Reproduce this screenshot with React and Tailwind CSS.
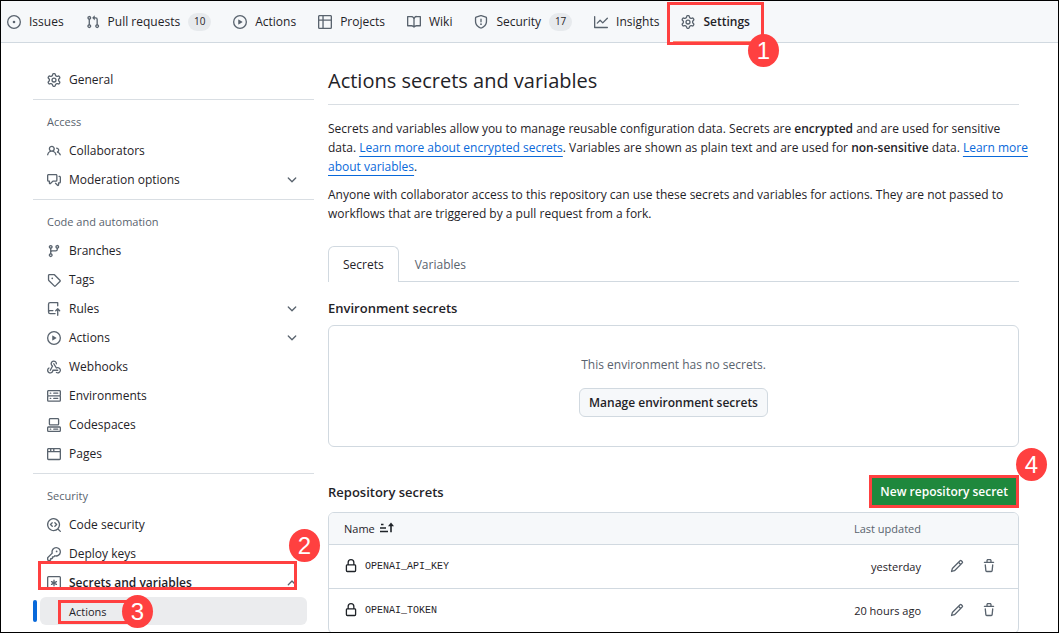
import React from "react";

const PATHS = {
  issue: "M8 9.5a1.5 1.5 0 1 0 0-3 1.5 1.5 0 0 0 0 3ZM8 0a8 8 0 1 1 0 16A8 8 0 0 1 8 0ZM1.5 8a6.5 6.5 0 1 0 13 0 6.5 6.5 0 0 0-13 0Z",
  pull: "M1.5 3.25a2.25 2.25 0 1 1 3 2.122v5.256a2.251 2.251 0 1 1-1.5 0V5.372A2.25 2.25 0 0 1 1.5 3.25Zm5.677-.177L9.573.677A.25.25 0 0 1 10 .854V2.5h1A2.5 2.5 0 0 1 13.5 5v5.628a2.251 2.251 0 1 1-1.5 0V5a1 1 0 0 0-1-1h-1v1.646a.25.25 0 0 1-.427.177L7.177 3.427a.25.25 0 0 1 0-.354ZM3.75 2.5a.75.75 0 1 0 0 1.5.75.75 0 0 0 0-1.5Zm0 9.5a.75.75 0 1 0 0 1.5.75.75 0 0 0 0-1.5Zm8.25.75a.75.75 0 1 0 1.5 0 .75.75 0 0 0-1.5 0Z",
  play: "M8 0a8 8 0 1 1 0 16A8 8 0 0 1 8 0ZM1.5 8a6.5 6.5 0 1 0 13 0 6.5 6.5 0 0 0-13 0Zm4.879-2.773 4.264 2.559a.25.25 0 0 1 0 .428l-4.264 2.559A.25.25 0 0 1 6 10.559V5.442a.25.25 0 0 1 .379-.215Z",
  table: "M0 1.75C0 .784.784 0 1.75 0h12.5C15.216 0 16 .784 16 1.75v12.5A1.75 1.75 0 0 1 14.25 16H1.75A1.75 1.75 0 0 1 0 14.25ZM6.5 6.5v8h7.75a.25.25 0 0 0 .25-.25V6.5Zm8-1.5V1.75a.25.25 0 0 0-.25-.25H6.5V5Zm-13 1.5v7.75c0 .138.112.25.25.25H5v-8ZM5 5V1.5H1.75a.25.25 0 0 0-.25.25V5Z",
  book: "M0 1.75A.75.75 0 0 1 .75 1h4.253c1.227 0 2.317.59 3 1.501A3.743 3.743 0 0 1 11.006 1h4.245a.75.75 0 0 1 .75.75v10.5a.75.75 0 0 1-.75.75h-4.507a2.25 2.25 0 0 0-1.591.659l-.622.621a.75.75 0 0 1-1.06 0l-.622-.621A2.25 2.25 0 0 0 5.258 13H.75a.75.75 0 0 1-.75-.75Zm7.251 10.324.004-5.073-.002-2.253A2.25 2.25 0 0 0 5.003 2.5H1.5v9h3.757a3.75 3.75 0 0 1 1.994.574ZM8.755 4.75l-.004 7.322a3.752 3.752 0 0 1 1.992-.572H14.5v-9h-3.495a2.25 2.25 0 0 0-2.25 2.25Z",
  shield: "M7.467.133a1.748 1.748 0 0 1 1.066 0l5.25 1.68A1.75 1.75 0 0 1 15 3.48V7c0 1.566-.32 3.182-1.303 4.682-.983 1.498-2.585 2.813-5.032 3.855a1.697 1.697 0 0 1-1.33 0c-2.447-1.042-4.049-2.357-5.032-3.855C1.32 10.182 1 8.566 1 7V3.48a1.75 1.75 0 0 1 1.217-1.667Zm.61 1.429a.25.25 0 0 0-.153 0l-5.25 1.68a.25.25 0 0 0-.174.238V7c0 1.358.275 2.666 1.057 3.86.784 1.194 2.121 2.34 4.366 3.297a.196.196 0 0 0 .154 0c2.245-.956 3.582-2.104 4.366-3.298C13.225 9.666 13.5 8.36 13.5 7V3.48a.251.251 0 0 0-.174-.237l-5.25-1.68ZM8.75 4.75v3a.75.75 0 0 1-1.5 0v-3a.75.75 0 0 1 1.5 0ZM9 10.5a1 1 0 1 1-2 0 1 1 0 0 1 2 0Z",
  graph: "M1.5 1.75V13.5h13.75a.75.75 0 0 1 0 1.5H.75a.75.75 0 0 1-.75-.75V1.75a.75.75 0 0 1 1.5 0Zm14.28 2.53-5.25 5.25a.75.75 0 0 1-1.06 0L7 7.06 4.28 9.78a.751.751 0 0 1-1.042-.018.751.751 0 0 1-.018-1.042l3.25-3.25a.75.75 0 0 1 1.06 0L10 7.94l4.72-4.72a.751.751 0 0 1 1.042.018.751.751 0 0 1 .018 1.042Z",
  gear: "M8 0a8.2 8.2 0 0 1 .701.031C9.444.095 9.99.645 10.16 1.29l.288 1.107c.018.066.079.158.212.224.231.114.454.243.668.386.123.082.233.09.299.071l1.103-.303c.644-.176 1.392.021 1.82.63.27.385.506.792.704 1.218.315.675.111 1.422-.364 1.891l-.814.806c-.049.048-.098.147-.088.294.016.257.016.515 0 .772-.01.147.038.246.088.294l.814.806c.475.469.679 1.216.364 1.891a7.977 7.977 0 0 1-.704 1.217c-.428.61-1.176.807-1.82.63l-1.102-.302c-.067-.019-.177-.011-.3.071a5.909 5.909 0 0 1-.668.386c-.133.066-.194.158-.211.224l-.29 1.106c-.168.646-.715 1.196-1.458 1.26a8.006 8.006 0 0 1-1.402 0c-.743-.064-1.289-.614-1.458-1.26l-.289-1.106c-.018-.066-.079-.158-.212-.224a5.738 5.738 0 0 1-.668-.386c-.123-.082-.233-.09-.299-.071l-1.103.303c-.644.176-1.392-.021-1.82-.63a8.12 8.12 0 0 1-.704-1.218c-.315-.675-.111-1.422.363-1.891l.815-.806c.05-.048.098-.147.088-.294a6.214 6.214 0 0 1 0-.772c.01-.147-.038-.246-.088-.294l-.815-.806C.635 6.045.431 5.298.746 4.623a7.92 7.92 0 0 1 .704-1.217c.428-.61 1.176-.807 1.82-.63l1.102.302c.067.019.177.011.3-.071.214-.143.437-.272.668-.386.133-.066.194-.158.211-.224l.29-1.106C6.009.645 6.556.095 7.299.03 7.53.01 7.764 0 8 0Zm-.571 1.525c-.036.003-.108.036-.137.146l-.289 1.105c-.147.561-.549.967-.998 1.189-.173.086-.34.183-.5.29-.417.278-.97.423-1.529.27l-1.103-.303c-.109-.03-.175.016-.195.045-.22.312-.412.644-.573.99-.014.031-.021.11.059.19l.815.806c.411.406.562.957.53 1.456a4.709 4.709 0 0 0 0 .582c.032.499-.119 1.05-.53 1.456l-.815.806c-.081.08-.073.159-.059.19.162.346.353.677.573.989.02.03.085.076.195.046l1.102-.303c.56-.153 1.113-.008 1.53.27.161.107.328.204.501.29.447.222.85.629.997 1.189l.289 1.105c.029.109.101.143.137.146a6.6 6.6 0 0 0 1.142 0c.036-.003.108-.036.137-.146l.289-1.105c.147-.561.549-.967.998-1.189.173-.086.34-.183.5-.29.417-.278.97-.423 1.529-.27l1.103.303c.109.029.175-.016.195-.045.22-.313.411-.644.573-.99.014-.031.021-.11-.059-.19l-.815-.806c-.411-.406-.562-.957-.53-1.456a4.709 4.709 0 0 0 0-.582c-.032-.499.119-1.05.53-1.456l.815-.806c.081-.08.073-.159.059-.19a6.464 6.464 0 0 0-.573-.989c-.02-.03-.085-.076-.195-.046l-1.102.303c-.56.153-1.113.008-1.53-.27a4.44 4.44 0 0 0-.501-.29c-.447-.222-.85-.629-.997-1.189l-.289-1.105c-.029-.11-.101-.143-.137-.146a6.6 6.6 0 0 0-1.142 0ZM11 8a3 3 0 1 1-6 0 3 3 0 0 1 6 0ZM9.5 8a1.5 1.5 0 1 0-3.001.001A1.5 1.5 0 0 0 9.5 8Z",
  people: "M2 5.5a3.5 3.5 0 1 1 5.898 2.549 5.508 5.508 0 0 1 3.034 4.084.75.75 0 1 1-1.482.235 4 4 0 0 0-7.9 0 .75.75 0 0 1-1.482-.236A5.507 5.507 0 0 1 3.102 8.05 3.493 3.493 0 0 1 2 5.5ZM11 4a3.001 3.001 0 0 1 2.22 5.018 5.01 5.01 0 0 1 2.56 3.012.749.749 0 0 1-.885.954.752.752 0 0 1-.549-.514 3.507 3.507 0 0 0-2.522-2.372.75.75 0 0 1-.574-.73v-.352a.75.75 0 0 1 .416-.672A1.5 1.5 0 0 0 11 5.5.75.75 0 0 1 11 4Zm-5.5-.5a2 2 0 1 0-.001 3.999A2 2 0 0 0 5.5 3.5Z",
  discussion: "M1.75 1h8.5c.966 0 1.75.784 1.75 1.75v5.5A1.75 1.75 0 0 1 10.25 10H7.061l-2.574 2.573A1.458 1.458 0 0 1 2 11.543V10h-.25A1.75 1.75 0 0 1 0 8.25v-5.5C0 1.784.784 1 1.75 1ZM1.5 2.75v5.5c0 .138.112.25.25.25h1a.75.75 0 0 1 .75.75v2.19l2.72-2.72a.749.749 0 0 1 .53-.22h3.5a.25.25 0 0 0 .25-.25v-5.5a.25.25 0 0 0-.25-.25h-8.5a.25.25 0 0 0-.25.25Zm13 2a.25.25 0 0 0-.25-.25h-.5a.75.75 0 0 1 0-1.5h.5c.966 0 1.75.784 1.75 1.75v5.5A1.75 1.75 0 0 1 14.25 12H14v1.543a1.458 1.458 0 0 1-2.487 1.03L9.22 12.28a.749.749 0 0 1 .326-1.275.749.749 0 0 1 .734.215l2.22 2.22v-2.19a.75.75 0 0 1 .75-.75h1a.25.25 0 0 0 .25-.25Z",
  chevronDown: "M12.78 5.22a.749.749 0 0 1 0 1.06l-4.25 4.25a.749.749 0 0 1-1.06 0L3.22 6.28a.749.749 0 1 1 1.06-1.06L8 8.939l3.72-3.719a.749.749 0 0 1 1.06 0Z",
  chevronUp: "M3.22 10.53a.749.749 0 0 1 0-1.06l4.25-4.25a.749.749 0 0 1 1.06 0l4.25 4.25a.749.749 0 1 1-1.06 1.06L8 6.811 4.28 10.53a.749.749 0 0 1-1.06 0Z",
  branch: "M9.5 3.25a2.25 2.25 0 1 1 3 2.122V6A2.5 2.5 0 0 1 10 8.5H6a1 1 0 0 0-1 1v1.128a2.251 2.251 0 1 1-1.5 0V5.372a2.25 2.25 0 1 1 1.5 0v1.836A2.493 2.493 0 0 1 6 7h4a1 1 0 0 0 1-1v-.628A2.25 2.25 0 0 1 9.5 3.25Zm-6 0a.75.75 0 1 0 1.5 0 .75.75 0 0 0-1.5 0Zm8.25-.75a.75.75 0 1 0 0 1.5.75.75 0 0 0 0-1.5ZM4.25 12a.75.75 0 1 0 0 1.5.75.75 0 0 0 0-1.5Z",
  tag: "M1 7.775V2.75C1 1.784 1.784 1 2.75 1h5.025c.464 0 .91.184 1.238.513l6.25 6.25a1.75 1.75 0 0 1 0 2.474l-5.026 5.026a1.75 1.75 0 0 1-2.474 0l-6.25-6.25A1.752 1.752 0 0 1 1 7.775Zm1.5 0c0 .066.026.13.073.177l6.25 6.25a.25.25 0 0 0 .354 0l5.025-5.025a.25.25 0 0 0 0-.354l-6.25-6.25a.25.25 0 0 0-.177-.073H2.75a.25.25 0 0 0-.25.25ZM6 5a1 1 0 1 1 0 2 1 1 0 0 1 0-2Z",
  repoPush: "M1 2.5A2.5 2.5 0 0 1 3.5 0h8.75a.75.75 0 0 1 .75.75v3.5a.75.75 0 0 1-1.5 0V1.5h-8a1 1 0 0 0-1 1v6.708A2.493 2.493 0 0 1 3.5 9h3.25a.75.75 0 0 1 0 1.5H3.5a1 1 0 0 0 0 2h5.75a.75.75 0 0 1 0 1.5H3.5A2.5 2.5 0 0 1 1 11.5ZM11.5 15.25V9.6l-.97.97a.75.75 0 0 1-1.06-1.06l2.25-2.25a.75.75 0 0 1 1.06 0l2.25 2.25a.75.75 0 0 1-1.06 1.06L13 9.6v5.65a.75.75 0 0 1-1.5 0Z",
  webhook: "M5.5 4.25a2.25 2.25 0 0 1 4.5 0 .75.75 0 0 0 1.5 0 3.75 3.75 0 1 0-6.14 2.889l-2.272 4.258a.75.75 0 0 0 1.324.706L7 7.25a.75.75 0 0 0-.309-1.015A2.25 2.25 0 0 1 5.5 4.25ZM7.364 3.607a.75.75 0 0 1 1.03.257l2.608 4.349a3.75 3.75 0 1 1-.628 6.785.75.75 0 0 1 .752-1.299 2.25 2.25 0 1 0-.033-3.88.75.75 0 0 1-1.03-.256L7.107 4.636a.75.75 0 0 1 .257-1.03ZM2.9 8.776A.75.75 0 0 1 2.625 9.8 2.25 2.25 0 1 0 6 11.75a.75.75 0 0 1 .75-.751h5.5a.75.75 0 0 1 0 1.5H7.425a3.751 3.751 0 1 1-5.55-3.998.75.75 0 0 1 1.024.274Z",
  server: "M1.75 1h12.5c.966 0 1.75.784 1.75 1.75v4c0 .372-.116.717-.314 1 .198.283.314.628.314 1v4a1.75 1.75 0 0 1-1.75 1.75H1.75A1.75 1.75 0 0 1 0 12.75v-4c0-.358.109-.707.314-1a1.739 1.739 0 0 1-.314-1v-4C0 1.784.784 1 1.75 1ZM1.5 2.75v4c0 .138.112.25.25.25h12.5a.25.25 0 0 0 .25-.25v-4a.25.25 0 0 0-.25-.25H1.75a.25.25 0 0 0-.25.25Zm.25 5.75a.25.25 0 0 0-.25.25v4c0 .138.112.25.25.25h12.5a.25.25 0 0 0 .25-.25v-4a.25.25 0 0 0-.25-.25ZM7 4.75A.75.75 0 0 1 7.75 4h4.5a.75.75 0 0 1 0 1.5h-4.5A.75.75 0 0 1 7 4.75ZM7.75 10h4.5a.75.75 0 0 1 0 1.5h-4.5a.75.75 0 0 1 0-1.5ZM3 4.75A.75.75 0 0 1 3.75 4h.5a.75.75 0 0 1 0 1.5h-.5A.75.75 0 0 1 3 4.75ZM3.75 10h.5a.75.75 0 0 1 0 1.5h-.5a.75.75 0 0 1 0-1.5Z",
  codespaces: "M0 11.25c0-.966.784-1.75 1.75-1.75h12.5c.966 0 1.75.784 1.75 1.75v3A1.75 1.75 0 0 1 14.25 16H1.75A1.75 1.75 0 0 1 0 14.25Zm2-9.5C2 .784 2.784 0 3.75 0h8.5C13.216 0 14 .784 14 1.75v5a1.75 1.75 0 0 1-1.75 1.75h-8.5A1.75 1.75 0 0 1 2 6.75Zm1.75-.25a.25.25 0 0 0-.25.25v5c0 .138.112.25.25.25h8.5a.25.25 0 0 0 .25-.25v-5a.25.25 0 0 0-.25-.25Zm-2 9.5a.25.25 0 0 0-.25.25v3c0 .138.112.25.25.25h12.5a.25.25 0 0 0 .25-.25v-3a.25.25 0 0 0-.25-.25ZM7 12.75a.75.75 0 0 1 .75-.75h4.5a.75.75 0 0 1 0 1.5h-4.5a.75.75 0 0 1-.75-.75Zm-4 0a.75.75 0 0 1 .75-.75h.5a.75.75 0 0 1 0 1.5h-.5a.75.75 0 0 1-.75-.75Z",
  browser: "M0 2.75C0 1.784.784 1 1.75 1h12.5c.966 0 1.75.784 1.75 1.75v10.5A1.75 1.75 0 0 1 14.25 15H1.75A1.75 1.75 0 0 1 0 13.25ZM14.5 6h-13v7.25c0 .138.112.25.25.25h12.5a.25.25 0 0 0 .25-.25Zm-6-3.5v2h6V2.75a.25.25 0 0 0-.25-.25ZM5 2.5v2h2v-2Zm-3.25 0a.25.25 0 0 0-.25.25V4.5h2v-2Z",
  codescan: "M8.47 4.97a.75.75 0 0 0 0 1.06L9.94 7.5 8.47 8.97a.75.75 0 1 0 1.06 1.06l2-2a.75.75 0 0 0 0-1.06l-2-2a.75.75 0 0 0-1.06 0ZM6.53 6.03a.75.75 0 0 0-1.06-1.06l-2 2a.75.75 0 0 0 0 1.06l2 2a.75.75 0 1 0 1.06-1.06L5.06 7.5l1.47-1.47ZM12.246 13.307a7.501 7.501 0 1 1 1.06-1.06l2.474 2.473a.749.749 0 0 1-.326 1.275.749.749 0 0 1-.734-.215ZM1.5 7.5a6.002 6.002 0 0 0 3.608 5.504 6.002 6.002 0 0 0 6.486-1.117.748.748 0 0 1 .292-.293A6 6 0 1 0 1.5 7.5Z",
  key: "M10.5 0a5.499 5.499 0 1 1-1.288 10.848l-.932.932a.749.749 0 0 1-.53.22H7v.75a.749.749 0 0 1-.22.53l-.5.5a.749.749 0 0 1-.53.22H5v.75a.749.749 0 0 1-.22.53l-.5.5a.749.749 0 0 1-.53.22h-2A1.75 1.75 0 0 1 0 14.25v-2c0-.199.079-.389.22-.53l4.932-4.932A5.5 5.5 0 0 1 10.5 0Zm-4 5.5c-.001.431.069.86.205 1.269a.75.75 0 0 1-.181.768L1.5 12.56v1.69c0 .138.112.25.25.25h1.69l.06-.06v-1.19a.75.75 0 0 1 .75-.75h1.19l.06-.06v-1.19a.75.75 0 0 1 .75-.75h1.19l1.023-1.025a.75.75 0 0 1 .768-.18A4 4 0 1 0 6.5 5.5ZM11 6a1 1 0 1 1 0-2 1 1 0 0 1 0 2Z",
  lock: "M4 4a4 4 0 0 1 8 0v2h.25c.966 0 1.75.784 1.75 1.75v5.5A1.75 1.75 0 0 1 12.25 15h-8.5A1.75 1.75 0 0 1 2 13.25v-5.5C2 6.784 2.784 6 3.75 6H4Zm8.25 3.5h-8.5a.25.25 0 0 0-.25.25v5.5c0 .138.112.25.25.25h8.5a.25.25 0 0 0 .25-.25v-5.5a.25.25 0 0 0-.25-.25ZM10.5 6V4a2.5 2.5 0 1 0-5 0v2Z",
  pencil: "M11.013 1.427a1.75 1.75 0 0 1 2.474 0l1.086 1.086a1.75 1.75 0 0 1 0 2.474l-8.61 8.61c-.21.21-.47.364-.756.445l-3.251.93a.75.75 0 0 1-.927-.928l.929-3.25c.081-.286.235-.547.445-.758l8.61-8.61Zm.176 4.823L9.75 4.81l-6.286 6.287a.253.253 0 0 0-.064.108l-.558 1.953 1.953-.558a.253.253 0 0 0 .108-.064Zm1.238-3.763a.25.25 0 0 0-.354 0L10.811 3.75l1.439 1.44 1.263-1.263a.25.25 0 0 0 0-.354Z",
  trash: "M11 1.75V3h2.25a.75.75 0 0 1 0 1.5H2.75a.75.75 0 0 1 0-1.5H5V1.75C5 .784 5.784 0 6.75 0h2.5C10.216 0 11 .784 11 1.75ZM4.496 6.675l.66 6.6a.25.25 0 0 0 .249.225h5.19a.25.25 0 0 0 .249-.225l.66-6.6a.75.75 0 0 1 1.492.149l-.66 6.6A1.748 1.748 0 0 1 10.595 15h-5.19a1.75 1.75 0 0 1-1.741-1.575l-.66-6.6a.75.75 0 1 1 1.492-.15ZM6.5 1.75V3h3V1.75a.25.25 0 0 0-.25-.25h-2.5a.25.25 0 0 0-.25.25Z",
};

function Icon({ name, className = "text-[#59636e]" }) {
  return (
    <svg viewBox="0 0 16 16" width="14" height="14" aria-hidden="true" className={`shrink-0 ${className}`}>
      {name === "asterisk" ? (
        <g fill="none" stroke="currentColor" strokeWidth="1.5" strokeLinecap="round">
          <rect x="0.75" y="0.75" width="14.5" height="14.5" rx="1" />
          <path d="M8 4.750v6.500M5.200 6.400l5.600 3.200M10.800 6.400 5.200 9.600" />
        </g>
      ) : (
        <path fill="currentColor" fillRule="evenodd" d={PATHS[name]} />
      )}
    </svg>
  );
}

function SortIcon() {
  return (
    <svg viewBox="0 0 16 16" width="16" height="16" aria-hidden="true" className="shrink-0">
      <g fill="none" stroke="currentColor" strokeWidth="1.4">
        <path d="M2 4.500h2.500M1 8h6M1 11.500h8" />
        <path d="M12 12.200V4" strokeWidth="1.600" />
      </g>
      <path d="M12 2.600 15 6.200H9Z" fill="currentColor" />
    </svg>
  );
}

function Frame({ className }) {
  return <span aria-hidden="true" className={`pointer-events-none absolute border-[3px] border-[#ff4040] ${className}`} />;
}

function Step({ n, className }) {
  return (
    <span className={`absolute z-10 flex h-[33px] w-[31px] items-center justify-center rounded-[50%] bg-[#ff4040] font-['Liberation_Sans',sans-serif] text-[24px] font-normal leading-none text-white ${className}`}>
      {n}
    </span>
  );
}

const NAV = [
  { icon: "issue", label: "Issues" },
  { icon: "pull", label: "Pull requests", count: 10 },
  { icon: "play", label: "Actions" },
  { icon: "table", label: "Projects" },
  { icon: "book", label: "Wiki" },
  { icon: "shield", label: "Security", count: 17 },
  { icon: "graph", label: "Insights" },
];

const GROUPS = [
  { items: [{ icon: "gear", label: "General" }] },
  {
    title: "Access",
    items: [
      { icon: "people", label: "Collaborators" },
      { icon: "discussion", label: "Moderation options", more: true },
    ],
  },
  {
    title: "Code and automation",
    items: [
      { icon: "branch", label: "Branches" },
      { icon: "tag", label: "Tags" },
      { icon: "repoPush", label: "Rules", more: true },
      { icon: "play", label: "Actions", more: true },
      { icon: "webhook", label: "Webhooks" },
      { icon: "server", label: "Environments" },
      { icon: "codespaces", label: "Codespaces" },
      { icon: "browser", label: "Pages" },
    ],
  },
  {
    title: "Security",
    items: [
      { icon: "codescan", label: "Code security" },
      { icon: "key", label: "Deploy keys" },
    ],
  },
];

const SECRETS = [
  { name: "OPENAI_API_KEY", updated: "yesterday" },
  { name: "OPENAI_TOKEN", updated: "20 hours ago" },
];

function TopNav() {
  return (
    <nav aria-label="Repository" className="flex h-[42px] shrink-0 gap-[10px] border-b border-[#d1d9e0] bg-[#f6f8fa]">
      {NAV.map((item) => (
        <a key={item.label} href="#" className="flex items-center gap-2 whitespace-nowrap px-1.5">
          <Icon name={item.icon} />
          {item.label}
          {item.count && (
            <span className="flex h-[18px] w-[23px] items-center justify-center rounded-full bg-[#e7eaed] text-[10px] font-medium">{item.count}</span>
          )}
        </a>
      ))}
      <a href="#" aria-current="page" className="relative flex items-center gap-2 whitespace-nowrap px-1.5 font-semibold">
        <Icon name="gear" />
        Settings
        <span aria-hidden="true" className="absolute -inset-x-0.5 -bottom-px h-0.5 bg-[#fd8c73]" />
        <Frame className="-inset-x-2 -bottom-[3px] top-px" />
        <Step n={1} className="-bottom-[25px] -right-[23px]" />
      </a>
    </nav>
  );
}

function SideRow({ icon, label, more }) {
  const cls = "flex h-[29px] w-full items-center gap-2 pl-[14px] pr-[15px] text-left";
  if (more) {
    return (
      <button type="button" aria-expanded="false" className={cls}>
        <Icon name={icon} />
        <span className="flex-1">{label}</span>
        <Icon name="chevronDown" />
      </button>
    );
  }
  return (
    <a href="#" className={cls}>
      <Icon name={icon} />
      {label}
    </a>
  );
}

function Sidebar() {
  return (
    <nav aria-label="Settings" className="w-[281px] shrink-0 pt-[22px]">
      {GROUPS.map((group, i) => (
        <section key={i} className={i < GROUPS.length - 1 ? "border-b border-[#d9dee3] pb-[5px]" : ""}>
          {group.title && (
            <h3 className="flex h-9 items-center pl-[14px] pt-1.5 text-[11px] font-medium text-[#59636e]">{group.title}</h3>
          )}
          <ul>
            {group.items.map((item) => (
              <li key={item.label}>
                <SideRow {...item} />
              </li>
            ))}
          </ul>
        </section>
      ))}
      <div className="relative">
        <button type="button" aria-expanded="true" className="flex h-[29px] w-full items-center gap-2 pl-[14px] pr-[15px] text-left font-semibold">
          <Icon name="asterisk" />
          <span className="flex-1">Secrets and variables</span>
          <Icon name="chevronUp" />
        </button>
        <Frame className="-top-[7px] left-[5px] right-[17px] h-[29px]" />
        <Step n={2} className="-right-[6px] -top-[39px]" />
      </div>
      <div className="relative flex items-center gap-[3px]">
        <span aria-hidden="true" className="h-[22px] w-1 rounded-full bg-[#0969da]" />
        <a href="#" aria-current="page" className="mr-[7px] flex h-[28px] flex-1 items-center rounded-md bg-[#ebecee] pl-[29px] text-[11px]">
          Actions
        </a>
        <Frame className="left-[25px] top-[3px] h-[24px] w-[72px]" />
        <Step n={3} className="-top-[2px] left-[89px]" />
      </div>
    </nav>
  );
}

function DocLink({ children }) {
  return (
    <a href="#" className="text-[#0969da] underline underline-offset-4">
      {children}
    </a>
  );
}

function SecretsTable() {
  return (
    <div className="mt-1 overflow-hidden rounded-md border border-[#d1d9e0]">
      <table className="w-full border-collapse">
        <thead className="bg-[#f6f8fa] text-[11px]">
          <tr className="h-[31px] border-b border-[#d1d9e0]">
            <th scope="col" className="pl-[15px] text-left font-medium">
              <button type="button" className="flex items-center gap-1">
                Name
                <SortIcon />
              </button>
            </th>
            <th scope="col" className="text-right font-medium text-[#59636e]">Last updated</th>
            <td className="w-[97px]" />
          </tr>
        </thead>
        <tbody>
          {SECRETS.map((s) => (
            <tr key={s.name} className="h-[44px] border-b border-[#d1d9e0]">
              <td className="pl-[15px]">
                <span className="flex items-center gap-[7px]">
                  <Icon name="lock" className="text-[#1f2328]" />
                  <code className="font-['Liberation_Mono',monospace] text-[10px]">{s.name}</code>
                </span>
              </td>
              <td className="text-right text-[11px]">{s.updated}</td>
              <td>
                <span className="flex items-center justify-end gap-[18px] pr-[22px]">
                  <button type="button" aria-label={`Edit ${s.name}`}><Icon name="pencil" /></button>
                  <button type="button" aria-label={`Delete ${s.name}`}><Icon name="trash" /></button>
                </span>
              </td>
            </tr>
          ))}
        </tbody>
      </table>
    </div>
  );
}

export default function App() {
  return (
    <div className="flex h-screen flex-col overflow-hidden border border-black bg-white font-['Open_Sans','Noto_Sans',sans-serif] text-[12px] leading-[19px] text-[#1f2328]">
      <TopNav />
      <div className="flex min-h-0 flex-1 gap-[14px] pl-8 pr-[39px]">
        <Sidebar />
        <main className="min-w-0 flex-1 pt-[22px]">
          <h1 className="border-b border-[#d9dee3] pb-[7px] text-[20px] leading-[32px]">Actions secrets and variables</h1>
          <div className="-mr-3 mt-[14px] flex flex-col gap-[9px]">
            <p>
              Secrets and variables allow you to manage reusable configuration data. Secrets are <strong className="font-semibold">encrypted</strong> and are used for sensitive data. <DocLink>Learn more about encrypted secrets</DocLink>. Variables are shown as plain text and are used for <strong className="font-semibold">non-sensitive</strong> data. <DocLink>Learn more about variables</DocLink>.
            </p>
            <p>
              Anyone with collaborator access to this repository can use these secrets and variables for actions. They are not passed to workflows that are triggered by a pull request from a fork.
            </p>
          </div>
          <div role="tablist" className="mt-[23px] flex border-b border-[#d1d9e0]">
            <button type="button" role="tab" aria-selected="true" className="-mb-px h-9 rounded-t-md border border-b-0 border-[#d1d9e0] bg-white px-[14px]">Secrets</button>
            <button type="button" role="tab" aria-selected="false" className="-mb-px h-9 border border-b-0 border-transparent px-[15px] text-[#59636e]">Variables</button>
          </div>
          <h2 className="mt-4 text-[13px] font-semibold leading-[20px]">Environment secrets</h2>
          <section className="mt-[7px] flex h-[122px] flex-col items-center justify-center gap-[14px] rounded-md border border-[#d1d9e0]">
            <p className="text-[#59636e]">This environment has no secrets.</p>
            <button type="button" className="h-[29px] rounded-md border border-[#d1d9e0] bg-[#f6f8fa] px-[9px] font-semibold">Manage environment secrets</button>
          </section>
          <div className="mt-7 flex items-center justify-between">
            <h2 className="text-[13px] font-semibold leading-[20px]">Repository secrets</h2>
            <div className="relative">
              <button type="button" className="block h-[33px] border-[3px] border-[#ff4040] bg-[#1f883d] px-2 font-semibold text-white">New repository secret</button>
              <Step n={4} className="-right-[28px] -top-[27px]" />
            </div>
          </div>
          <SecretsTable />
        </main>
      </div>
    </div>
  );
}
